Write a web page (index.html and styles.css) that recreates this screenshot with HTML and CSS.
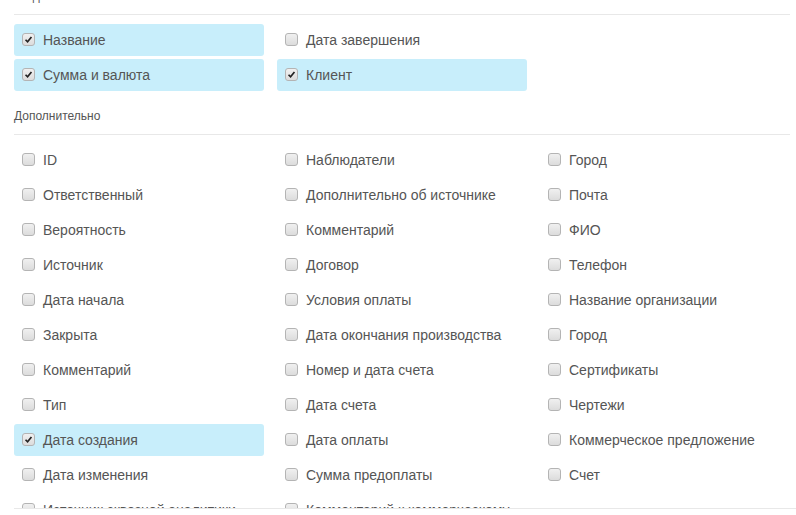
FILE: index.html
```html
<!DOCTYPE html>
<html lang="ru">
  <head>
    <meta charset="UTF-8" />
    <title>Поля сделки</title>
    <link rel="stylesheet" href="styles.css">
  </head>
  <body>
    <div class="fields-scroll">
      <div class="fields-content">
        <div class="field-group">
          <div class="group-title">О сделке</div>
          <div class="field-grid">
            <label class="field checked"><span class="box"><svg viewBox="0 0 13 13"><path d="M3 6.8 L5.4 9.2 L10 3.6" /></svg></span>Название</label>
            <label class="field"><span class="box"></span>Дата завершения</label>
            <div></div>
            <label class="field checked"><span class="box"><svg viewBox="0 0 13 13"><path d="M3 6.8 L5.4 9.2 L10 3.6" /></svg></span>Сумма и валюта</label>
            <label class="field checked"><span class="box"><svg viewBox="0 0 13 13"><path d="M3 6.8 L5.4 9.2 L10 3.6" /></svg></span>Клиент</label>
          </div>
        </div>

        <div class="field-group">
          <div class="group-title">Дополнительно</div>
          <div class="field-grid">
            <label class="field"><span class="box"></span>ID</label>
            <label class="field"><span class="box"></span>Наблюдатели</label>
            <label class="field"><span class="box"></span>Город</label>

            <label class="field"><span class="box"></span>Ответственный</label>
            <label class="field"><span class="box"></span>Дополнительно об источнике</label>
            <label class="field"><span class="box"></span>Почта</label>

            <label class="field"><span class="box"></span>Вероятность</label>
            <label class="field"><span class="box"></span>Комментарий</label>
            <label class="field"><span class="box"></span>ФИО</label>

            <label class="field"><span class="box"></span>Источник</label>
            <label class="field"><span class="box"></span>Договор</label>
            <label class="field"><span class="box"></span>Телефон</label>

            <label class="field"><span class="box"></span>Дата начала</label>
            <label class="field"><span class="box"></span>Условия оплаты</label>
            <label class="field"><span class="box"></span>Название организации</label>

            <label class="field"><span class="box"></span>Закрыта</label>
            <label class="field"><span class="box"></span>Дата окончания производства</label>
            <label class="field"><span class="box"></span>Город</label>

            <label class="field"><span class="box"></span>Комментарий</label>
            <label class="field"><span class="box"></span>Номер и дата счета</label>
            <label class="field"><span class="box"></span>Сертификаты</label>

            <label class="field"><span class="box"></span>Тип</label>
            <label class="field"><span class="box"></span>Дата счета</label>
            <label class="field"><span class="box"></span>Чертежи</label>

            <label class="field checked"><span class="box"><svg viewBox="0 0 13 13"><path d="M3 6.8 L5.4 9.2 L10 3.6" /></svg></span>Дата создания</label>
            <label class="field"><span class="box"></span>Дата оплаты</label>
            <label class="field"><span class="box"></span>Коммерческое предложение</label>

            <label class="field"><span class="box"></span>Дата изменения</label>
            <label class="field"><span class="box"></span>Сумма предоплаты</label>
            <label class="field"><span class="box"></span>Счет</label>

            <label class="field"><span class="box"></span>Источник сквозной аналитики</label>
            <label class="field"><span class="box"></span>Комментарий к коммерческому предложению</label>
            <div></div>
          </div>
        </div>
      </div>
    </div>
    <div class="fields-footer"></div>
  </body>
</html>
```

FILE: styles.css
```css
body {
  margin: 0;
  font-family: "Liberation Sans", Arial, sans-serif;
  background: #fff;
  color: #555;
}

.fields-scroll {
  height: 508px;
  overflow: hidden;
}

.fields-content {
  margin-top: -12px;
  padding: 0 6px 0 14px;
}

.field-group {
  margin-bottom: 17px;
}

.group-title {
  font-size: 12px;
  line-height: 16px;
  color: #555;
  padding-bottom: 10px;
  border-bottom: 1px solid #e8e8e8;
  margin-bottom: 9px;
}

.field-grid {
  display: grid;
  grid-template-columns: repeat(3, 250px);
  column-gap: 13px;
  row-gap: 3px;
}

.field {
  display: flex;
  align-items: flex-start;
  gap: 8px;
  padding: 8px 0 8px 8px;
  line-height: 16px;
  border-radius: 3px;
  font-size: 14px;
  color: #555;
}

.field.checked {
  background: #c8eefb;
}

.box {
  width: 11px;
  height: 11px;
  flex-shrink: 0;
  border: 1px solid #b4b4b4;
  border-radius: 3px;
  background: linear-gradient(#f0f0f0, #dcdcdc);
  display: flex;
  margin-top: 1px;
}

.box svg {
  width: 11px;
  height: 11px;
}

.box path {
  fill: none;
  stroke: #222;
  stroke-width: 2;
}

.fields-footer {
  margin-left: 14px;
  border-top: 1px solid #e8e8e8;
}
```
